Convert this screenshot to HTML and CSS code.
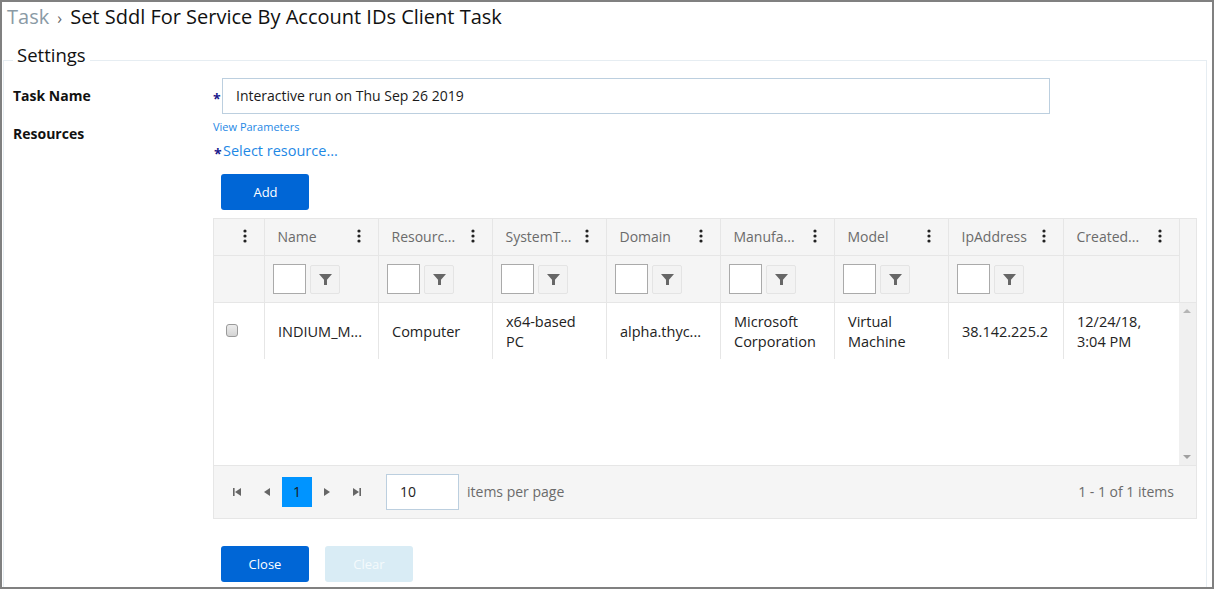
FILE: index.html
```html
<!DOCTYPE html>
<html lang="en">
<head>
    <meta charset="UTF-8">
    <title>Set Sddl For Service By Account IDs Client Task</title>
    <link rel="stylesheet" href="styles.css">
</head>
<body>
    <svg class="defs" width="0" height="0">
        <symbol id="kebab" viewBox="0 0 4 14"><circle cx="2" cy="2" r="1.6"/><circle cx="2" cy="7" r="1.6"/><circle cx="2" cy="12" r="1.6"/></symbol>
        <symbol id="funnel" viewBox="0 0 14 14"><path d="M0 1h14L8.6 7.2V13H5.4V7.2z"/></symbol>
        <symbol id="first" viewBox="0 0 8 8"><path d="M0 0h1.6v8H0zM8 0v8L2 4z"/></symbol>
        <symbol id="prev" viewBox="0 0 8 8"><path d="M7 0v8L1 4z"/></symbol>
        <symbol id="next" viewBox="0 0 8 8"><path d="M1 0v8l6-4z"/></symbol>
        <symbol id="last" viewBox="0 0 8 8"><path d="M0 0v8l6-4zM6.4 0H8v8H6.4z"/></symbol>
    </svg>

    <div class="frame">
        <h1 class="crumbs"><span class="crumb-root">Task</span><span class="crumb-sep">›</span>Set Sddl For Service By Account IDs Client Task</h1>

        <fieldset class="settings">
            <legend>Settings</legend>

            <div class="form-row name-row">
                <label class="form-label name-label">Task Name</label>
                <div class="form-field">
                    <span class="req">*</span>
                    <input class="text-input" type="text" value="Interactive run on Thu Sep 26 2019">
                </div>
            </div>

            <div class="form-row">
                <label class="form-label res-label">Resources</label>
                <div class="form-field-col">
                    <a class="link-small">View Parameters</a>
                    <div class="select-line"><span class="req">*</span><a class="link-select">Select resource...</a></div>
                    <button class="btn btn-primary add-btn">Add</button>

                    <div class="grid">
                        <div class="grid-head">
                            <div class="head-cols">
                                <div class="hcell check-head"><svg class="kebab"><use href="#kebab"/></svg></div>
                                <div class="hcell"><span class="hname">Name</span><svg class="kebab"><use href="#kebab"/></svg></div>
                                <div class="hcell"><span class="hname">Resourc...</span><svg class="kebab"><use href="#kebab"/></svg></div>
                                <div class="hcell"><span class="hname">SystemT...</span><svg class="kebab"><use href="#kebab"/></svg></div>
                                <div class="hcell"><span class="hname">Domain</span><svg class="kebab"><use href="#kebab"/></svg></div>
                                <div class="hcell"><span class="hname">Manufa...</span><svg class="kebab"><use href="#kebab"/></svg></div>
                                <div class="hcell"><span class="hname">Model</span><svg class="kebab"><use href="#kebab"/></svg></div>
                                <div class="hcell"><span class="hname">IpAddress</span><svg class="kebab"><use href="#kebab"/></svg></div>
                                <div class="hcell"><span class="hname">Created...</span><svg class="kebab"><use href="#kebab"/></svg></div>
                            </div>
                            <div class="head-cols filter-cols">
                                <div class="fcell"></div>
                                <div class="fcell"><input class="filter-input"><button class="filter-btn"><svg><use href="#funnel"/></svg></button></div>
                                <div class="fcell"><input class="filter-input"><button class="filter-btn"><svg><use href="#funnel"/></svg></button></div>
                                <div class="fcell"><input class="filter-input"><button class="filter-btn"><svg><use href="#funnel"/></svg></button></div>
                                <div class="fcell"><input class="filter-input"><button class="filter-btn"><svg><use href="#funnel"/></svg></button></div>
                                <div class="fcell"><input class="filter-input"><button class="filter-btn"><svg><use href="#funnel"/></svg></button></div>
                                <div class="fcell"><input class="filter-input"><button class="filter-btn"><svg><use href="#funnel"/></svg></button></div>
                                <div class="fcell"><input class="filter-input"><button class="filter-btn"><svg><use href="#funnel"/></svg></button></div>
                                <div class="fcell"></div>
                            </div>
                        </div>

                        <div class="grid-body">
                            <div class="head-cols data-row">
                                <div class="dcell check-cell"><input class="row-check" type="checkbox"></div>
                                <div class="dcell">INDIUM_M...</div>
                                <div class="dcell">Computer</div>
                                <div class="dcell">x64-based PC</div>
                                <div class="dcell">alpha.thyc...</div>
                                <div class="dcell">Microsoft Corporation</div>
                                <div class="dcell">Virtual Machine</div>
                                <div class="dcell">38.142.225.2</div>
                                <div class="dcell">12/24/18, 3:04 PM</div>
                            </div>
                            <div class="scrollbar"><span class="arrow-up"></span><span class="arrow-down"></span></div>
                        </div>

                        <div class="pager">
                            <button class="page-nav"><svg><use href="#first"/></svg></button>
                            <button class="page-nav"><svg><use href="#prev"/></svg></button>
                            <span class="page-current">1</span>
                            <button class="page-nav"><svg><use href="#next"/></svg></button>
                            <button class="page-nav"><svg><use href="#last"/></svg></button>
                            <input class="page-size" type="text" value="10">
                            <span class="page-label">items per page</span>
                            <span class="page-info">1 - 1 of 1 items</span>
                        </div>
                    </div>

                    <div class="actions">
                        <button class="btn btn-primary">Close</button>
                        <button class="btn btn-disabled">Clear</button>
                    </div>
                </div>
            </div>
        </fieldset>
    </div>
</body>
</html>
```
FILE: styles.css
```css
* {
    box-sizing: border-box;
}
html, body {
    margin: 0;
    height: 100%;
}
body {
    font-family: "Open Sans", "Liberation Sans", sans-serif;
    font-size: 14px;
    color: #1a1a1a;
    background: #fff;
}
.defs {
    position: absolute;
}
.frame {
    height: 589px;
    border: 2px solid #808080;
    overflow: hidden;
    padding: 2px 0 0 1px;
}
.crumbs {
    margin: 0 0 0 4px;
    font-size: 20px;
    font-weight: 400;
    line-height: 26px;
    color: #111;
}
.crumb-root {
    color: #8a9aa5;
}
.crumb-sep {
    display: inline-block;
    width: 21px;
    text-align: center;
    color: #666;
    font-size: 16px;
}
.settings {
    margin: 11px 5px 0 0;
    padding: 0 0 0 9px;
    height: 560px;
    border: 1px solid #e6edf2;
}
.settings legend {
    margin-left: 0;
    padding: 0 4px 10px;
    font-size: 18.5px;
    line-height: 26px;
    color: #111;
}
.form-row {
    display: flex;
}
.form-label {
    width: 200px;
    flex: none;
    font-weight: 700;
    color: #111;
}
.name-row {
    height: 36px;
    align-items: center;
}
.name-label {
    padding-bottom: 2px;
}
.form-field {
    display: flex;
    align-items: center;
    flex: 1;
}
.req {
    width: 9px;
    flex: none;
    color: #1a1a8c;
    font-size: 14px;
    font-weight: 700;
    line-height: 14px;
    padding-top: 6px;
}
.text-input {
    width: 828px;
    height: 36px;
    padding: 0 13px 2px;
    border: 1px solid #bccfdf;
    font: inherit;
    font-size: 14px;
    color: #1a1a1a;
}
.res-label {
    margin-top: 10px;
}
.form-field-col {
    display: flex;
    flex-direction: column;
    align-items: flex-start;
}
.link-small {
    margin-top: 5px;
    font-size: 11px;
    line-height: 16px;
    color: #1e88e5;
}
.select-line {
    display: flex;
    margin-top: 5px;
    height: 20px;
    align-items: center;
}
.select-line .req {
    width: 10px;
    padding-top: 8px;
    padding-left: 1px;
}
.link-select {
    font-size: 14.5px;
    color: #1e88e5;
}
.btn {
    width: 88px;
    height: 36px;
    border: none;
    border-radius: 3px;
    font: inherit;
    font-size: 13px;
    color: #fff;
}
.btn-primary {
    background: #0066d6;
}
.btn-disabled {
    background: #d9ecf5;
    color: #f4fafc;
}
.add-btn {
    margin: 14px 0 8px 8px;
    padding-left: 7px;
    padding-right: 6px;
}
.grid {
    width: 984px;
    border: 1px solid #e6e6e6;
}
.grid-head {
    position: relative;
    background: #f5f5f5;
    border-bottom: 1px solid #e6e6e6;
}
.head-cols {
    display: grid;
    grid-template-columns: 51px repeat(6, 114px) 115px 116px;
}
.hcell {
    height: 37px;
    display: flex;
    align-items: center;
    justify-content: space-between;
    padding: 0 17px 0 12.5px;
    border-right: 1px solid #e6e6e6;
    border-bottom: 1px solid #e6e6e6;
    color: #6b6b6b;
    font-size: 14px;
}
.check-head {
    justify-content: flex-end;
}
.hname {
    white-space: nowrap;
    margin-bottom: 2px;
}
.kebab {
    width: 4px;
    height: 14px;
    margin-bottom: 3px;
    fill: #222;
}
.fcell {
    height: 46px;
    display: flex;
    align-items: center;
    gap: 4px;
    padding: 0 8px;
    border-right: 1px solid #e6e6e6;
}
.filter-input {
    width: 33px;
    height: 30px;
    padding: 0;
    border: 1px solid #aaa;
    background: #fff;
}
.filter-btn {
    width: 30px;
    height: 29px;
    padding: 0;
    display: flex;
    align-items: center;
    justify-content: center;
    background: #f3f3f3;
    border: 1px solid #e4e4e4;
    border-radius: 2px;
}
.filter-btn svg {
    width: 13px;
    height: 13px;
    fill: #666;
}
.grid-body {
    position: relative;
    height: 163px;
    border-bottom: 1px solid #e6e6e6;
}
.data-row {
    height: 56px;
}
.dcell {
    display: flex;
    align-items: center;
    padding: 2px 13px 0;
    border-right: 1px solid #e6e6e6;
    font-size: 14.5px;
    line-height: 20px;
    color: #222;
}
.check-cell {
    padding: 0 0 2px 12px;
    align-items: center;
}
.row-check {
    appearance: none;
    width: 12px;
    height: 13px;
    margin: 0;
    border: 1px solid #9a9a9a;
    border-radius: 3px;
    background: linear-gradient(#ececec, #d4d4d4);
}
/* sits over the grid body like the native scrollbar */
.scrollbar {
    position: absolute;
    top: 0;
    right: 0;
    bottom: 0;
    width: 17px;
    background: #f0f0f0;
}
.arrow-up, .arrow-down {
    position: absolute;
    left: 4px;
    width: 0;
    height: 0;
    border-left: 4px solid transparent;
    border-right: 4px solid transparent;
}
.arrow-up {
    top: 6px;
    border-bottom: 4px solid #b5b5b5;
}
.arrow-down {
    bottom: 6px;
    border-top: 4px solid #a0a0a0;
}
.pager {
    height: 52px;
    display: flex;
    align-items: center;
    padding: 0 22px 0 8px;
    background: #f5f5f5;
    color: #6b6b6b;
    font-size: 14px;
}
.page-nav {
    width: 30px;
    height: 30px;
    padding: 0;
    border: none;
    background: none;
    display: flex;
    align-items: center;
    justify-content: center;
}
.page-nav svg {
    width: 8px;
    height: 8px;
    fill: #666;
}
.page-current {
    width: 30px;
    height: 30px;
    line-height: 30px;
    text-align: center;
    background: #0094ff;
    color: #1a1a1a;
}
.page-size {
    width: 73px;
    height: 36px;
    margin-left: 14px;
    padding: 0 13px 2px;
    border: 1px solid #bccfdf;
    font: inherit;
    color: #222;
}
.page-label {
    margin: 0 0 2px 8px;
}
.page-info {
    margin: 0 0 2px auto;
}
.actions {
    display: flex;
    gap: 16px;
    margin: 27px 0 0 8px;
}
```
